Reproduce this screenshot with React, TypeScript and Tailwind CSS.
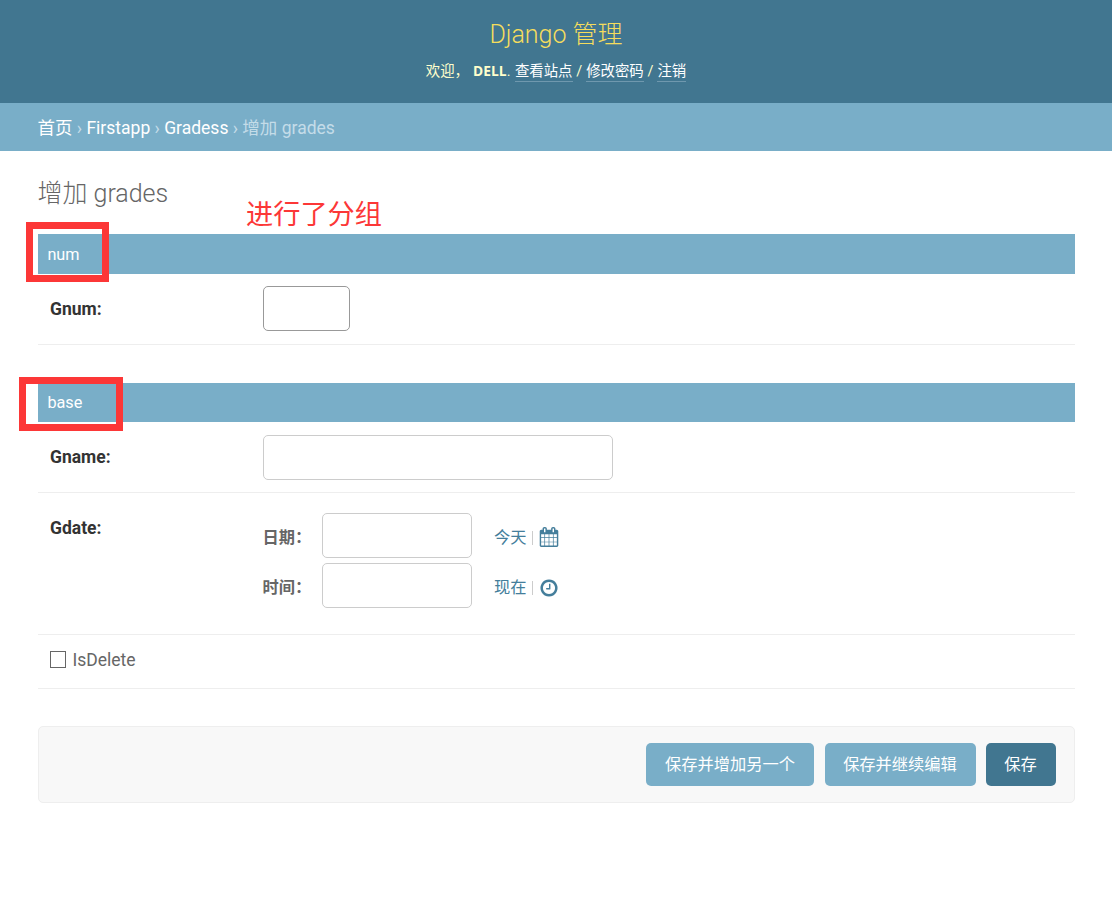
import React from "react";

const CALENDAR =
  "M192 1664h288v-288h-288v288zm352 0h320v-288h-320v288zm-352-352h288v-320h-288v320zm352 0h320v-320h-320v320zm-352-384h288v-288h-288v288zm736 736h320v-288h-320v288zm-384-736h320v-288h-320v288zm768 736h288v-288h-288v288zm-384-352h320v-320h-320v320zm-352-864v-288q0-13-9.5-22.5t-22.5-9.5h-64q-13 0-22.5 9.5t-9.5 22.5v288q0 13 9.5 22.5t22.5 9.5h64q13 0 22.5-9.5t9.5-22.5zm736 864h288v-320h-288v320zm-384-384h320v-288h-320v288zm384 0h288v-288h-288v288zm32-480v-288q0-13-9.5-22.5t-22.5-9.5h-64q-13 0-22.5 9.5t-9.5 22.5v288q0 13 9.5 22.5t22.5 9.5h64q13 0 22.5-9.5t9.5-22.5zm384-64v1280q0 52-38 90t-90 38h-1408q-52 0-90-38t-38-90v-1280q0-52 38-90t90-38h128v-96q0-66 47-113t113-47h64q66 0 113 47t47 113v96h384v-96q0-66 47-113t113-47h64q66 0 113 47t47 113v96h128q52 0 90 38t38 90z";
const CLOCK =
  "M1024 544v448q0 14-9 23t-23 9h-320q-14 0-23-9t-9-23v-64q0-14 9-23t23-9h224v-352q0-14 9-23t23-9h64q14 0 23 9t9 23zm416 352q0-148-73-273t-198-198-273-73-273 73-198 198-73 273 73 273 198 198 273 73 273-73 198-198 73-273zm224 0q0 209-103 385.5t-279.5 279.5-385.5 103-385.5-103-279.5-279.5-103-385.5 103-385.5 279.5-279.5 385.5-103 385.5 103 279.5 279.5 103 385.5z";

function ToolLink({ children }: { children: React.ReactNode }) {
  return (
    <a href="#" className="h-5 border-b border-[#6f98ae] text-white">
      {children}
    </a>
  );
}

function Header() {
  return (
    <header className="flex h-[103px] flex-col items-center bg-[#417690] text-[#ffffcc]">
      <h1 className="mt-5 h-[30px] text-[25px] leading-[30px] font-light text-[#f5dd5d]">Django 管理</h1>
      <div className="mt-3 flex h-5 text-[14.4px] leading-5 whitespace-pre">
        <span>欢迎，</span>
        <strong className="ml-[4px] font-['Open_Sans'] text-[13.75px] leading-[18px] font-bold tracking-[0.1px]">DELL</strong>
        <span className="tracking-[0.4px]">. </span>
        <ToolLink>查看站点</ToolLink>
        <span className="tracking-[0.2px]"> / </span>
        <ToolLink>修改密码</ToolLink>
        <span className="tracking-[0.2px]"> / </span>
        <ToolLink>注销</ToolLink>
      </div>
    </header>
  );
}

function Section({ title, headingClass, children }: { title: string; headingClass: string; children: React.ReactNode }) {
  return (
    <fieldset className="relative min-w-0">
      <h2 className={"flex items-center bg-[#79aec8] pl-[9.4px] text-[16.25px] text-white " + headingClass}>{title}</h2>
      {children}
    </fieldset>
  );
}

function Field({ className, label, children }: { className: string; label: string; children: React.ReactNode }) {
  return (
    <div className={"flex border-b border-[#eeeeee] pl-3 " + className}>
      <label className="w-[213px] shrink-0 text-[17.5px] leading-6 font-bold text-[#333333]">{label}</label>
      {children}
    </div>
  );
}

function TimeRow({ label, action, path, iconClass }: { label: string; action: string; path: string; iconClass: string }) {
  return (
    <div className="flex h-[45px] items-center">
      <span className="w-[59px] pt-[5px] text-[16.25px] font-bold text-[#666666]">
        <span className="-ml-[0.5px]">{label}</span>
      </span>
      <input className="h-[45px] w-[150px] rounded-[5px] border border-[#cccccc]" />
      <div className="ml-[22px] flex items-center pt-[3px] text-[16.25px] text-[#447e9b]">
        <a href="#" className="pt-[2px]">{action}</a>
        <span className="mx-[5px] mt-px h-[14px] w-px bg-[#cccccc]" />
        <svg viewBox="0 0 1792 1792" className={"ml-px box-content h-5 w-5 " + iconClass} fill="#447e9b">
          <path d={path} />
        </svg>
      </div>
    </div>
  );
}

export default function App() {
  return (
    <div className="h-[909px] bg-white font-[Roboto,'Noto_Sans_CJK_SC',sans-serif] text-[#333333]">
      <Header />
      <nav className="flex h-12 items-center bg-[#79aec8] pt-[2px] pl-[37.5px] text-[17.5px] leading-6 whitespace-pre text-[#c4dce8]">
        <a href="#" className="text-white">首页</a> › <a href="#" className="text-white">Firstapp</a> ›{" "}
        <a href="#" className="text-white">Gradess</a> › 增加 grades
      </nav>
      <main className="relative pr-[37px] pl-[38px]">
        <h1 className="-ml-[0.6px] h-[83px] pt-[27px] text-[25px] leading-[31px] font-light text-[#666666]">增加 grades</h1>
        <div className="absolute top-[44px] left-[246px] text-[27.2px] leading-10 whitespace-nowrap text-[#fc3737]">进行了分组</div>

        <Section title="num" headingClass="h-10 pt-[2px]">
          <div className="absolute -top-3 -left-3 h-[60px] w-[83px] border-[7px] border-[#fc3737]" />
          <Field className="h-[71px] pt-3 [&>label]:pt-[11px]" label="Gnum:">
            <input className="h-[45px] w-[87px] rounded-[5px] border border-[#999999]" />
          </Field>
        </Section>

        <div className="h-[38px]" />

        <Section title="base" headingClass="h-[39px] pt-px">
          <div className="absolute -top-[6px] -left-[19px] h-[54px] w-[104px] border-[7px] border-[#fc3737]" />
          <Field className="h-[71px] pt-[13px] [&>label]:pt-[10px]" label="Gname:">
            <input className="h-[45px] w-[350px] rounded-[5px] border border-[#cccccc]" />
          </Field>
          <Field className="h-[142px] pt-3 [&>label]:pt-[11px]" label="Gdate:">
            <div className="flex flex-col gap-[5px] pt-2">
              <TimeRow label="日期：" action="今天" path={CALENDAR} iconClass="pt-0" />
              <TimeRow label="时间：" action="现在" path={CLOCK} iconClass="pt-[2px]" />
            </div>
          </Field>
          <label className="flex h-[54px] items-center border-b border-[#eeeeee] pb-[3px] pl-3 text-[17.5px] text-[#666666]">
            <input type="checkbox" className="mr-[6.5px] h-[17px] w-4 -translate-y-px appearance-none border border-[#666666] bg-white" />
            IsDelete
          </label>
        </Section>

        <div className="mt-[37px] flex h-[77px] items-center justify-end rounded-[5px] border border-[#eeeeee] bg-[#f8f8f8] pr-[18px] text-[16.25px] text-white">
          <button className="mr-[11px] h-[43px] w-[168px] rounded-[5px] bg-[#79aec8] pt-[2px]">保存并增加另一个</button>
          <button className="mr-[10px] h-[43px] w-[151px] rounded-[5px] bg-[#79aec8] pt-[2px] pr-px">保存并继续编辑</button>
          <button className="h-[43px] w-[70px] rounded-[5px] bg-[#417690] pt-[2px] pr-px">保存</button>
        </div>
      </main>
    </div>
  );
}
